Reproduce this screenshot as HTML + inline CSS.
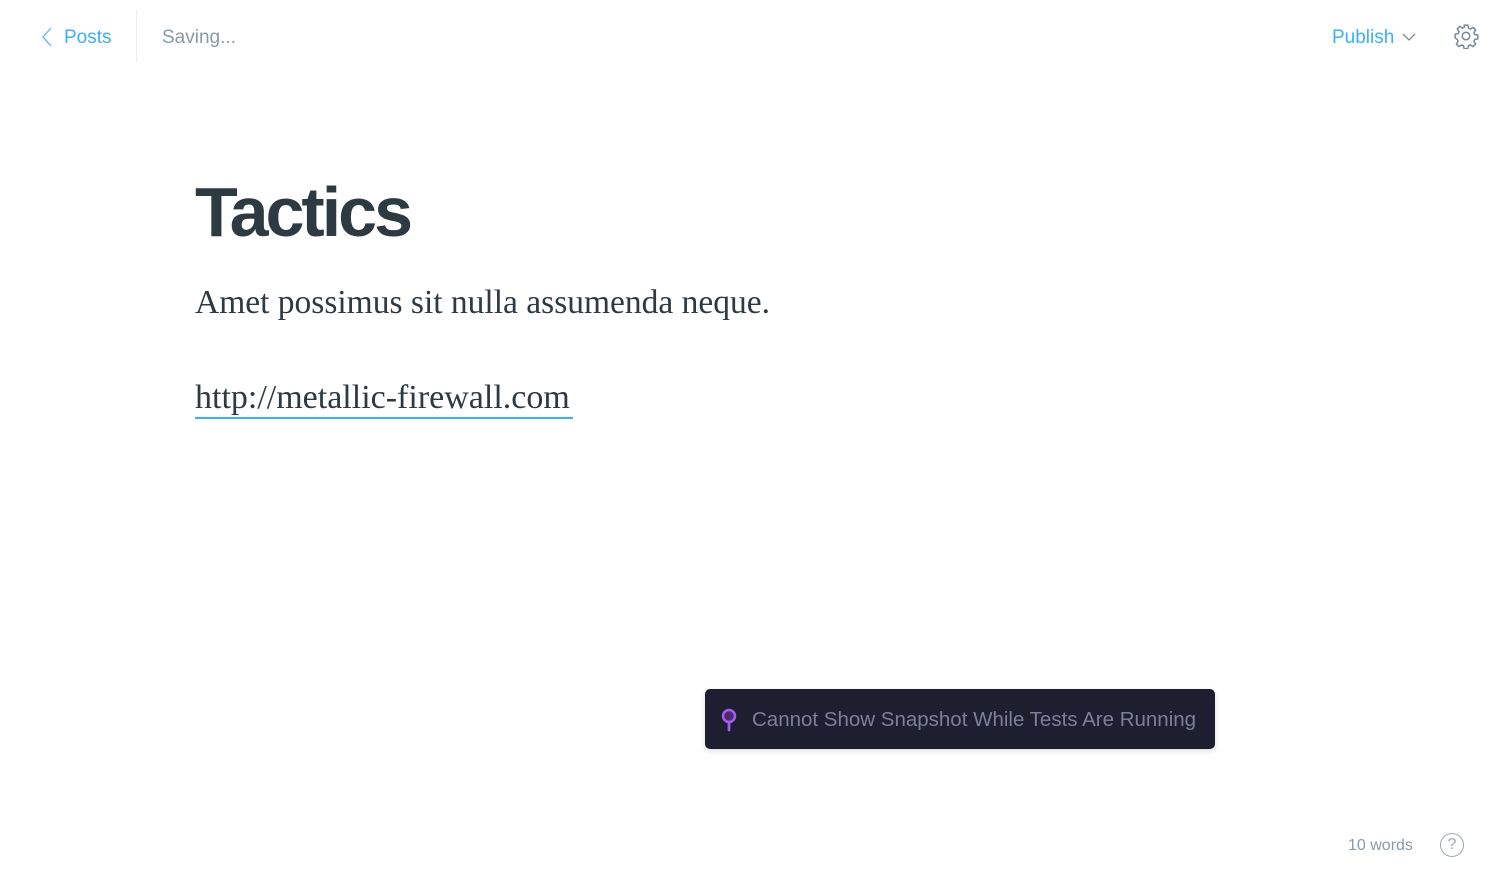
<!DOCTYPE html>
<html><head><meta charset="utf-8"><style>
*{margin:0;padding:0;box-sizing:border-box}
body{width:1500px;height:893px;background:#fff;position:relative;overflow:hidden;font-family:"Liberation Sans",sans-serif}
.a{position:absolute;white-space:nowrap}
</style></head><body>
<svg class="a" style="left:40px;top:27px" width="14" height="20" viewBox="0 0 14 20"><path d="M11 1 L3 10 L11 19" fill="none" stroke="#5ab9ea" stroke-width="1.3"/></svg>
<div class="a" style="left:64px;top:27px;font-size:19px;color:#3eb0ef">Posts</div>
<div class="a" style="left:136px;top:10px;width:1px;height:52px;background:#e3eef5"></div>
<div class="a" style="left:162px;top:27px;font-size:19px;color:#8a9aa6">Saving...</div>
<div class="a" style="left:1332px;top:27px;font-size:19px;color:#3eb0ef">Publish</div>
<svg class="a" style="left:1402px;top:32px" width="14" height="10" viewBox="0 0 14 10"><path d="M1 2 L7 8 L13 2" fill="none" stroke="#7d8b96" stroke-width="1.3"/></svg>
<svg class="a" style="left:1453px;top:23px" width="26" height="26" viewBox="0 0 24 24"><circle cx="12" cy="12" r="3.5" fill="none" stroke="#738a99" stroke-width="1.4"/><path d="M10.3 2h3.4l.6 2.8 1.8.8 2.4-1.6 2.4 2.4-1.6 2.4.8 1.8 2.8.6v3.4l-2.8.6-.8 1.8 1.6 2.4-2.4 2.4-2.4-1.6-1.8.8-.6 2.8h-3.4l-.6-2.8-1.8-.8-2.4 1.6-2.4-2.4 1.6-2.4-.8-1.8L2 13.7v-3.4l2.8-.6.8-1.8L4 5.5 6.4 3.1l2.4 1.6 1.8-.8z" fill="none" stroke="#738a99" stroke-width="1.4" stroke-linejoin="round"/></svg>
<div class="a" style="left:195px;top:172px;font-size:70px;font-weight:bold;color:#2e3a42;letter-spacing:-3px">Tactics</div>
<div class="a" style="left:195px;top:284px;font-family:'Liberation Serif',serif;font-size:33.5px;color:#2e3a42">Amet possimus sit nulla assumenda neque.</div>
<div class="a" style="left:195px;top:379px;font-family:'Liberation Serif',serif;font-size:34px;color:#2e3a42;line-height:38px">http://metallic-firewall.com</div>
<div class="a" style="left:195px;top:417px;width:378px;height:1.5px;background:#3eb0ef"></div>
<div class="a" style="left:705px;top:689px;width:510px;height:60px;background:#1d1e30;border-radius:5px;box-shadow:0 2px 6px rgba(0,0,0,.15)"></div>
<svg class="a" style="left:720px;top:708px" width="18" height="24" viewBox="0 0 18 24"><circle cx="9" cy="8" r="6" fill="#4b2a6e" stroke="#a35ef0" stroke-width="2.5"/><path d="M9 14v8" stroke="#a35ef0" stroke-width="2.8" stroke-linecap="round"/></svg>
<div class="a" style="left:752px;top:708px;font-size:20.5px;color:#7d7f9a">Cannot Show Snapshot While Tests Are Running</div>
<div class="a" style="left:1348px;top:837px;font-size:16px;color:#8a9aa6">10 words</div>
<div class="a" style="left:1440px;top:833px;width:24px;height:24px;border:1.3px solid #9aa8b2;border-radius:50%;font-size:16px;color:#9aa8b2;text-align:center;line-height:22px">?</div>
</body></html>
